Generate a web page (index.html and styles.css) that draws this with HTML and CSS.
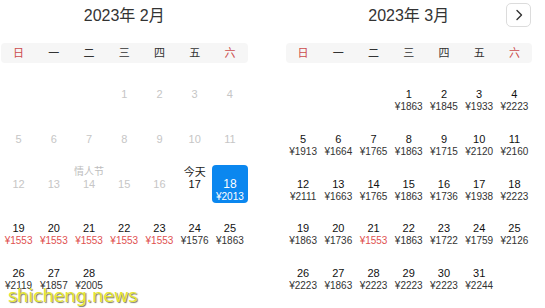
FILE: index.html
```html
<!DOCTYPE html>
<html lang="zh">
<head>
<meta charset="utf-8">
<link rel="stylesheet" href="styles.css">
</head>
<body>
<div class="cal">
  <section class="month m-left">
    <header class="head"><h2 class="title">2023年 2月</h2></header>
    <div class="week">
      <span class="we">日</span><span>一</span><span>二</span><span>三</span><span>四</span><span>五</span><span class="we">六</span>
    </div>
    <div class="days">
      <div class="d off first"><i></i><b>1</b><em></em></div>
      <div class="d off"><i></i><b>2</b><em></em></div>
      <div class="d off"><i></i><b>3</b><em></em></div>
      <div class="d off"><i></i><b>4</b><em></em></div>
      <div class="d off"><i></i><b>5</b><em></em></div>
      <div class="d off"><i></i><b>6</b><em></em></div>
      <div class="d off"><i></i><b>7</b><em></em></div>
      <div class="d off"><i></i><b>8</b><em></em></div>
      <div class="d off"><i></i><b>9</b><em></em></div>
      <div class="d off"><i></i><b>10</b><em></em></div>
      <div class="d off"><i></i><b>11</b><em></em></div>
      <div class="d off"><i></i><b>12</b><em></em></div>
      <div class="d off"><i></i><b>13</b><em></em></div>
      <div class="d off"><i class="fest">情人节</i><b>14</b><em></em></div>
      <div class="d off"><i></i><b>15</b><em></em></div>
      <div class="d off"><i></i><b>16</b><em></em></div>
      <div class="d"><i class="today">今天</i><b>17</b><em></em></div>
      <div class="d sel"><i></i><b>18</b><em>¥2013</em></div>
      <div class="d"><i></i><b>19</b><em class="low">¥1553</em></div>
      <div class="d"><i></i><b>20</b><em class="low">¥1553</em></div>
      <div class="d"><i></i><b>21</b><em class="low">¥1553</em></div>
      <div class="d"><i></i><b>22</b><em class="low">¥1553</em></div>
      <div class="d"><i></i><b>23</b><em class="low">¥1553</em></div>
      <div class="d"><i></i><b>24</b><em>¥1576</em></div>
      <div class="d"><i></i><b>25</b><em>¥1863</em></div>
      <div class="d"><i></i><b>26</b><em>¥2119</em></div>
      <div class="d"><i></i><b>27</b><em>¥1857</em></div>
      <div class="d"><i></i><b>28</b><em>¥2005</em></div>
    </div>
  </section>
  <section class="month m-right">
    <header class="head">
      <h2 class="title">2023年 3月</h2>
      <button class="next" type="button" aria-label="下个月">
        <svg width="10" height="12" viewBox="0 0 10 12"><path d="M3 1.5 L7.5 6 L3 10.5" fill="none" stroke="#333" stroke-width="1.4" stroke-linecap="round" stroke-linejoin="round"/></svg>
      </button>
    </header>
    <div class="week">
      <span class="we">日</span><span>一</span><span>二</span><span>三</span><span>四</span><span>五</span><span class="we">六</span>
    </div>
    <div class="days">
      <div class="d first"><i></i><b>1</b><em>¥1863</em></div>
      <div class="d"><i></i><b>2</b><em>¥1845</em></div>
      <div class="d"><i></i><b>3</b><em>¥1933</em></div>
      <div class="d"><i></i><b>4</b><em>¥2223</em></div>
      <div class="d"><i></i><b>5</b><em>¥1913</em></div>
      <div class="d"><i></i><b>6</b><em>¥1664</em></div>
      <div class="d"><i></i><b>7</b><em>¥1765</em></div>
      <div class="d"><i></i><b>8</b><em>¥1863</em></div>
      <div class="d"><i></i><b>9</b><em>¥1715</em></div>
      <div class="d"><i></i><b>10</b><em>¥2120</em></div>
      <div class="d"><i></i><b>11</b><em>¥2160</em></div>
      <div class="d"><i></i><b>12</b><em>¥2111</em></div>
      <div class="d"><i></i><b>13</b><em>¥1663</em></div>
      <div class="d"><i></i><b>14</b><em>¥1765</em></div>
      <div class="d"><i></i><b>15</b><em>¥1863</em></div>
      <div class="d"><i></i><b>16</b><em>¥1736</em></div>
      <div class="d"><i></i><b>17</b><em>¥1938</em></div>
      <div class="d"><i></i><b>18</b><em>¥2223</em></div>
      <div class="d"><i></i><b>19</b><em>¥1863</em></div>
      <div class="d"><i></i><b>20</b><em>¥1736</em></div>
      <div class="d"><i></i><b>21</b><em class="low">¥1553</em></div>
      <div class="d"><i></i><b>22</b><em>¥1863</em></div>
      <div class="d"><i></i><b>23</b><em>¥1722</em></div>
      <div class="d"><i></i><b>24</b><em>¥1759</em></div>
      <div class="d"><i></i><b>25</b><em>¥2126</em></div>
      <div class="d"><i></i><b>26</b><em>¥2223</em></div>
      <div class="d"><i></i><b>27</b><em>¥1863</em></div>
      <div class="d"><i></i><b>28</b><em>¥2223</em></div>
      <div class="d"><i></i><b>29</b><em>¥2223</em></div>
      <div class="d"><i></i><b>30</b><em>¥2223</em></div>
      <div class="d"><i></i><b>31</b><em>¥2244</em></div>
    </div>
  </section>
</div>
<div class="wm">shicheng.news</div>
</body>
</html>
```
FILE: styles.css
```css
* { box-sizing: border-box; }
html, body { margin: 0; padding: 0; background: #fff; }
body {
  width: 545px;
  height: 308px;
  overflow: hidden;
  position: relative;
  font-family: "Liberation Sans", "Noto Sans CJK SC", sans-serif;
  color: #222;
}
.cal {
  display: flex;
  gap: 38px;
  padding-left: 1px;
}
.month { width: 246.5px; position: relative; }
.head {
  height: 32px;
  display: flex;
  align-items: center;
  justify-content: center;
  margin-bottom: 11px;
}
.title {
  margin: 0;
  font-size: 16px;
  font-weight: normal;
  color: #333;
  line-height: 32px;
}
.next {
  position: absolute;
  right: 1px;
  top: 3px;
  width: 25px;
  height: 24px;
  border: 1px solid #dcdcdc;
  border-radius: 5px;
  background: #fff;
  padding: 0;
  display: flex;
  align-items: center;
  justify-content: center;
}
.week {
  display: grid;
  grid-template-columns: repeat(7, 1fr);
  height: 20px;
  background: #f6f6f6;
  border-radius: 4px;
  font-size: 11px;
  line-height: 20px;
  color: #333;
  text-align: center;
}
.week .we { color: #cc4b4b; }
.days {
  display: grid;
  grid-template-columns: repeat(7, 1fr);
  grid-auto-rows: 38px;
  row-gap: 6.75px;
  margin-top: 12px;
}
.first { grid-column-start: 4; }
.d {
  display: flex;
  flex-direction: column;
  align-items: center;
  padding-top: 1px;
  border-radius: 4px;
  text-align: center;
}
.d i {
  font-style: normal;
  height: 12px;
  line-height: 12px;
  font-size: 11px;
  white-space: nowrap;
}
.d i.fest { color: #bdbdbd; font-size: 10px; }
.d i.today { color: #222; }
.d b {
  font-weight: normal;
  font-size: 11px;
  height: 13px;
  line-height: 13px;
  color: #111;
}
.d em {
  font-style: normal;
  font-size: 10px;
  height: 12px;
  line-height: 12px;
  color: #333;
  white-space: nowrap;
}
.d em.low { color: #e0504f; }
.d.off b { color: #c6c6c6; }
.d.sel { background: #0b87ef; }
.d.sel b, .d.sel em { color: #fff; }
.d.sel b { font-size: 12px; }
.wm {
  position: absolute;
  left: 8px;
  top: 292px;
  font-family: "DejaVu Sans", sans-serif;
  font-size: 18px;
  line-height: 8px;
  letter-spacing: -0.3px;
  color: #e6e634;
  text-shadow: 1px 1px 1px rgba(60, 60, 40, 0.7);
}
```
